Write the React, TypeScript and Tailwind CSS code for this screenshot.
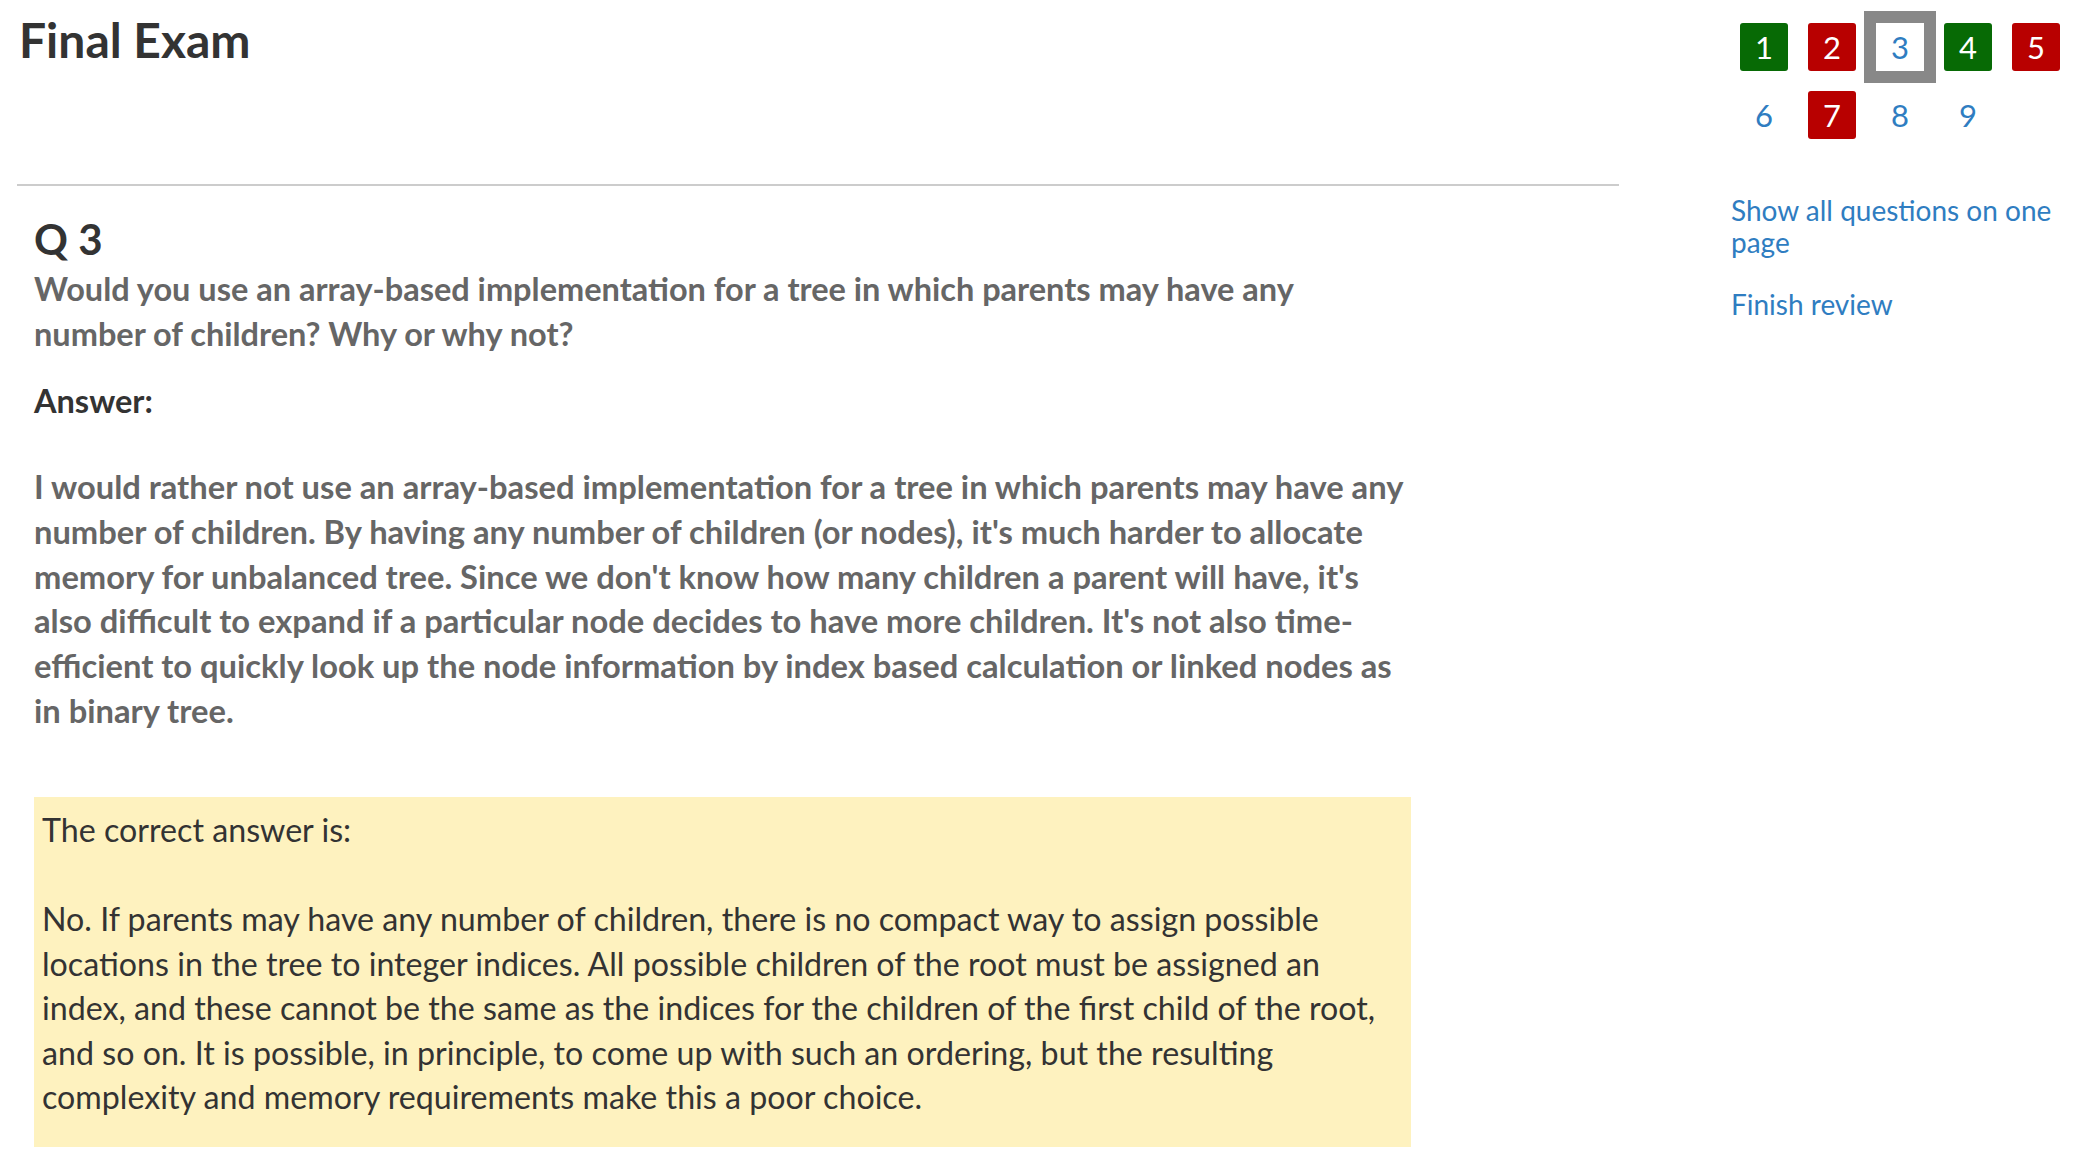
import React from "react";

type NavState = "correct" | "wrong" | "current" | "none";

const nav: { n: number; state: NavState }[] = [
  { n: 1, state: "correct" },
  { n: 2, state: "wrong" },
  { n: 3, state: "current" },
  { n: 4, state: "correct" },
  { n: 5, state: "wrong" },
  { n: 6, state: "none" },
  { n: 7, state: "wrong" },
  { n: 8, state: "none" },
  { n: 9, state: "none" },
];

function NavButton({ n, state }: { n: number; state: NavState }) {
  const base =
    "w-[48px] h-[48px] flex items-center justify-center rounded-[3px] text-[31px] leading-none";
  if (state === "correct") {
    return <div className={`${base} bg-[#076a05] text-white`}>{n}</div>;
  }
  if (state === "wrong") {
    return <div className={`${base} bg-[#b80000] text-white`}>{n}</div>;
  }
  if (state === "current") {
    return (
      <div className={`${base} rounded-none bg-white text-[#2f7dc1] shadow-[0_0_0_12px_#888888]`}>
        {n}
      </div>
    );
  }
  return <div className={`${base} text-[#2f7dc1]`}>{n}</div>;
}

export default function App(): React.ReactElement {
  return (
    <div className="w-[2076px] min-h-[1174px] bg-white flex font-['Lato','Liberation_Sans',sans-serif]">
      {/* main column */}
      <div className="w-[1602px] ml-[17px] shrink-0">
        <h1 className="pt-[12px] pl-[2px] text-[48px] leading-[56px] font-bold text-[#333333]">
          Final Exam
        </h1>
        <div className="mt-[116px] h-[2px] bg-[#cccccc]" />

        <div className="pl-[17px]">
          <h2 className="mt-[29px] text-[42px] leading-[48px] font-bold text-[#333333]">Q 3</h2>
          <p className="mt-[3px] text-[32.5px] leading-[45px] font-bold text-[#666666]">
            Would you use an array-based implementation for a tree in which parents may have any
            <br />
            number of children? Why or why not?
          </p>
          <p className="mt-[22px] text-[32.5px] leading-[45px] font-bold text-[#333333]">Answer:</p>
          <p className="mt-[42px] text-[32.7px] leading-[44.8px] font-bold text-[#666666]">
            I would rather not use an array-based implementation for a tree in which parents may have any
            <br />
            number of children. By having any number of children (or nodes), it's much harder to allocate
            <br />
            memory for unbalanced tree. Since we don't know how many children a parent will have, it's
            <br />
            also difficult to expand if a particular node decides to have more children. It's not also time-
            <br />
            efficient to quickly look up the node information by index based calculation or linked nodes as
            <br />
            in binary tree.
          </p>

          <div className="mt-[63px] w-[1377px] bg-[#fef2bf] pl-[8px] pr-[8px] pt-[11px] pb-[27px] text-[32.2px] leading-[44.6px] text-[#333333]">
            <p>The correct answer is:</p>
            <p className="mt-[44.6px]">
              No. If parents may have any number of children, there is no compact way to assign possible
              <br />
              locations in the tree to integer indices. All possible children of the root must be assigned an
              <br />
              index, and these cannot be the same as the indices for the children of the first child of the root,
              <br />
              and so on. It is possible, in principle, to come up with such an ordering, but the resulting
              <br />
              complexity and memory requirements make this a poor choice.
            </p>
          </div>
        </div>
      </div>

      {/* sidebar */}
      <div className="ml-[112px] w-[345px] shrink-0">
        <div className="pt-[23px] pl-[9px] grid grid-cols-[repeat(5,48px)] gap-[20px]">
          {nav.map((b) => (
            <NavButton key={b.n} n={b.n} state={b.state} />
          ))}
        </div>
        <div className="mt-[55px] text-[28px] leading-[32px] text-[#2f7dc1]">
          <div>
            Show all questions on one
            <br />
            page
          </div>
          <div className="mt-[30px]">Finish review</div>
        </div>
      </div>
    </div>
  );
}
